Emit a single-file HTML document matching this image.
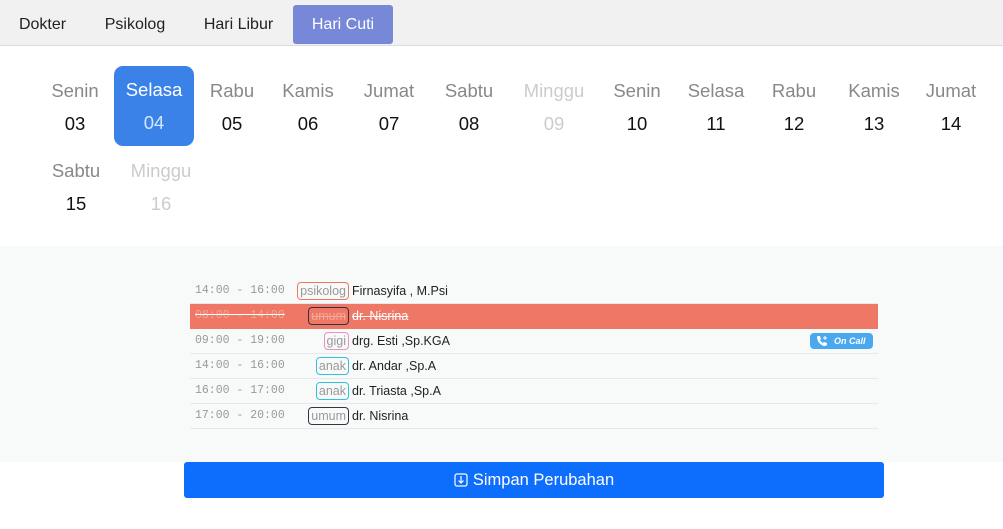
<!DOCTYPE html>
<html><head><meta charset="utf-8"><style>
*{box-sizing:border-box;margin:0;padding:0}
body{width:1003px;height:529px;background:#fff;font-family:"Liberation Sans",sans-serif;position:relative;overflow:hidden}
.tabs{position:absolute;left:0;top:0;width:1003px;height:46px;background:#f1f1f1;border-bottom:1px solid #ddd}
.tab{position:absolute;top:5px;height:39px;line-height:39px;font-size:16px;color:#222;text-align:center}
.tab.on{background:#7788d8;color:#fff;border-radius:3px}
.d{position:absolute;width:80px;text-align:center;font-size:18.5px}
.d .n{color:#888;display:block;height:33px;line-height:33px}
.d .v{color:#111;display:block;height:33px;line-height:33px}
.d.g .n,.d.g .v{color:#ccc}
.d.sel{background:#3b82e8;border-radius:9px;height:80px;padding-top:7px}
.d.sel .n{color:#fff}.d.sel .v{color:#d6e6ff}
.sec{position:absolute;left:0;top:246px;width:1003px;height:216px;background:#f8faf9}
.row{position:absolute;left:190px;width:688px;height:25px;border-bottom:1px solid #e8e8e8;font-size:12.5px}
.t{position:absolute;left:5px;top:0;line-height:24px;font-family:"Liberation Mono",monospace;font-size:11.5px;color:#999}
.b{position:absolute;right:529px;top:3px;height:18px;line-height:16px;border:1px solid;border-radius:4px;padding:0 2px;color:#999;font-size:12.5px}
.nm{position:absolute;left:162px;top:0;line-height:24px;color:#222}
.btn{position:absolute;left:184px;top:462px;width:700px;height:36px;background:#0d6efd;border-radius:3px;color:#fff;font-size:16.5px;text-align:center;line-height:36px}
</style></head><body>
<div class="tabs">
<div class="tab" style="left:0;width:85px">Dokter</div>
<div class="tab" style="left:85px;width:100px">Psikolog</div>
<div class="tab" style="left:185px;width:107px">Hari Libur</div>
<div class="tab on" style="left:293px;width:100px">Hari Cuti</div>
</div>
<div class="d" style="left:35px;top:74px"><span class="n">Senin</span><span class="v">03</span></div>
<div class="d sel" style="left:114px;top:66px"><span class="n">Selasa</span><span class="v">04</span></div>
<div class="d" style="left:192px;top:74px"><span class="n">Rabu</span><span class="v">05</span></div>
<div class="d" style="left:268px;top:74px"><span class="n">Kamis</span><span class="v">06</span></div>
<div class="d" style="left:349px;top:74px"><span class="n">Jumat</span><span class="v">07</span></div>
<div class="d" style="left:429px;top:74px"><span class="n">Sabtu</span><span class="v">08</span></div>
<div class="d g" style="left:514px;top:74px"><span class="n">Minggu</span><span class="v">09</span></div>
<div class="d" style="left:597px;top:74px"><span class="n">Senin</span><span class="v">10</span></div>
<div class="d" style="left:676px;top:74px"><span class="n">Selasa</span><span class="v">11</span></div>
<div class="d" style="left:754px;top:74px"><span class="n">Rabu</span><span class="v">12</span></div>
<div class="d" style="left:834px;top:74px"><span class="n">Kamis</span><span class="v">13</span></div>
<div class="d" style="left:911px;top:74px"><span class="n">Jumat</span><span class="v">14</span></div>
<div class="d" style="left:36px;top:154px"><span class="n">Sabtu</span><span class="v">15</span></div>
<div class="d g" style="left:121px;top:154px"><span class="n">Minggu</span><span class="v">16</span></div>
<div class="sec"></div>
<div class="row" style="top:279px"><span class="t">14:00 - 16:00</span><span class="b" style="border-color:#ee7766">psikolog</span><span class="nm">Firnasyifa , M.Psi</span></div>
<div class="row" style="top:304px;background:#ef7766;border:none"><span class="t" style="color:#f3a898;text-decoration:line-through;text-decoration-color:#fff">08:00 - 14:00</span><span class="b" style="border-color:#334;color:#f3a898;text-decoration:line-through">umum</span><span class="nm" style="color:#fff;text-decoration:line-through">dr. Nisrina</span></div>
<div class="row" style="top:329px"><span class="t">09:00 - 19:00</span><span class="b" style="border-color:#f08cc8">gigi</span><span class="nm">drg. Esti ,Sp.KGA</span>
<span style="position:absolute;left:620px;top:4px;width:63px;height:16px;background:#4aa8f0;border-radius:4px;color:#fff;font-size:9px;font-weight:bold;font-style:italic;line-height:16px;padding-left:24px">On Call<svg style="position:absolute;left:6px;top:2px" width="13" height="12" viewBox="0 0 13 12"><path d="M2 1 L4 1 L5 4 L4 5 Q5 7 7 8 L8 7 L11 8 L11 10 Q10 11 8 11 Q2 9 1 3 Q1 1 2 1Z" fill="#fff"/><path d="M9 1v4M7 3h4" stroke="#fff" stroke-width="1"/></svg></span></div>
<div class="row" style="top:354px"><span class="t">14:00 - 16:00</span><span class="b" style="border-color:#33c0e0">anak</span><span class="nm">dr. Andar ,Sp.A</span></div>
<div class="row" style="top:379px"><span class="t">16:00 - 17:00</span><span class="b" style="border-color:#33c0e0">anak</span><span class="nm">dr. Triasta ,Sp.A</span></div>
<div class="row" style="top:404px"><span class="t">17:00 - 20:00</span><span class="b" style="border-color:#334">umum</span><span class="nm">dr. Nisrina</span></div>
<div class="btn"><svg width="14" height="14" viewBox="0 0 14 14" style="vertical-align:-2px;margin-right:5px"><rect x="1" y="1" width="12" height="12" rx="2" fill="none" stroke="#fff" stroke-width="1.2"/><path d="M7 3v7M4.5 7.5L7 10l2.5-2.5" fill="none" stroke="#fff" stroke-width="1.2"/></svg>Simpan Perubahan</div>
</body></html>
